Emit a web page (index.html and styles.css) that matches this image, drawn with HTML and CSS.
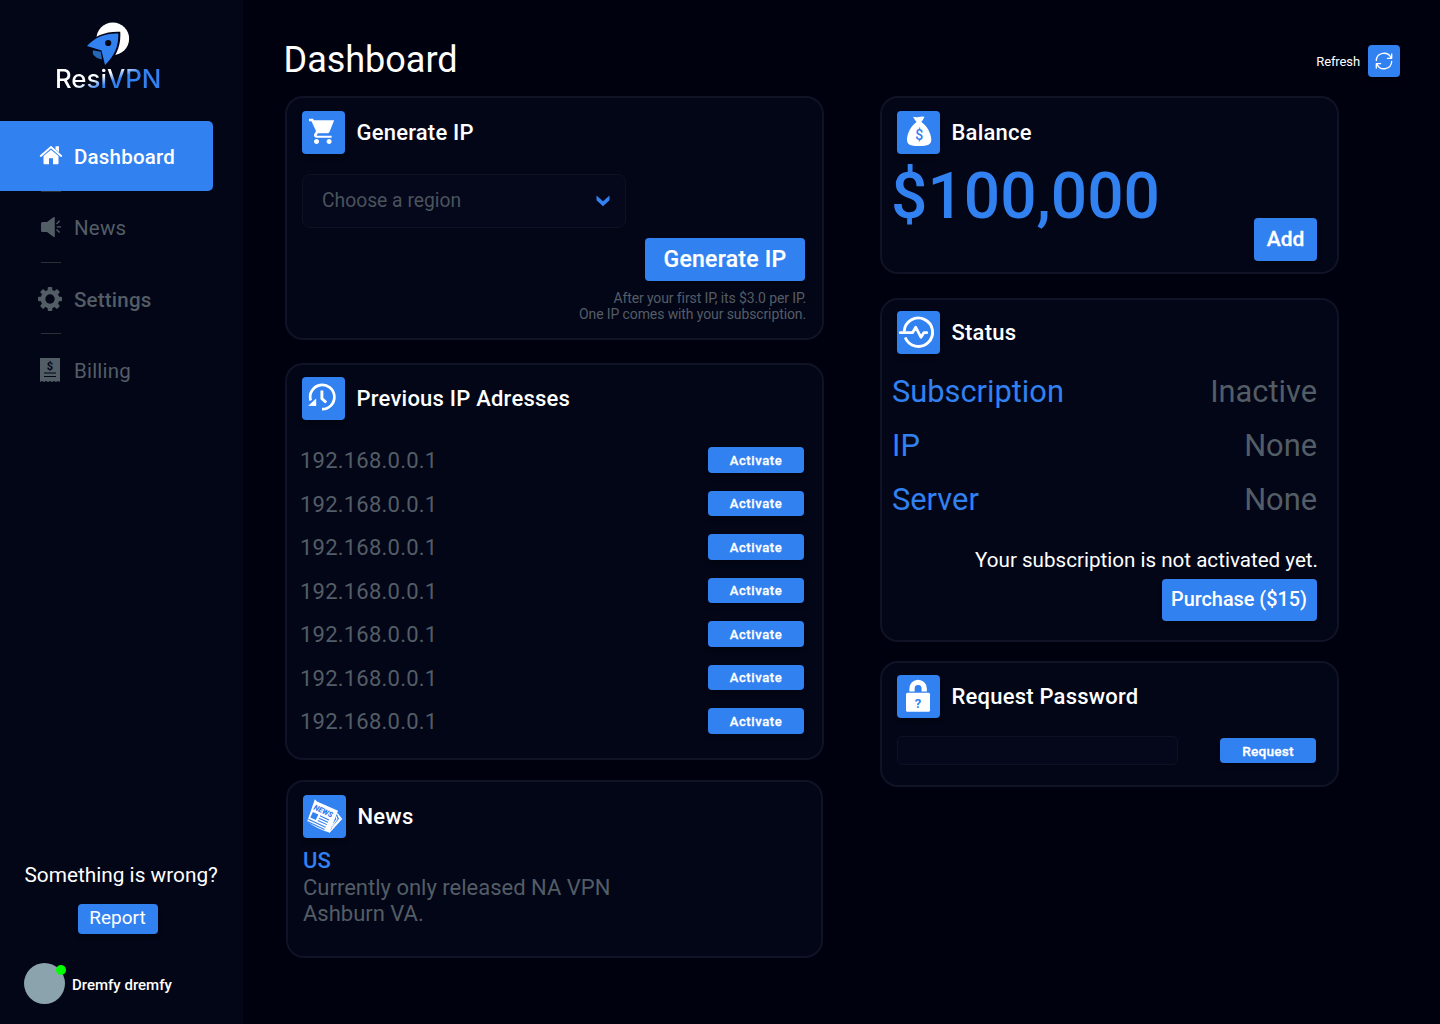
FILE: index.html
```html
<!DOCTYPE html>
<html lang="en">
<head>
<meta charset="utf-8">
<title>ResiVPN Dashboard</title>
<link rel="stylesheet" href="styles.css">
</head>
<body>
<div class="app">
  <aside class="sidebar">
    <div class="logo">
      <svg class="logo-mark" width="46" height="46" viewBox="0 0 46 46">
        <circle cx="27.8" cy="17.8" r="16.3" fill="#fff"/>
        <path d="M2 25 Q14 11.5 34 12 Q35 31 20 45 L16.5 29.5 Z" fill="#3281f1" stroke="#030617" stroke-width="2.6"/>
        <path d="M2 25 Q14 12 33.3 12.6 Q34 31 20 44 L16.5 29.5 Z" fill="#3281f1"/>
        <circle cx="23.2" cy="22" r="3.1" fill="#030617"/>
        <path d="M7.8 29.3 L15.8 30.8 L17 38.5 Q11 37.5 7.8 33 Z" fill="#2568b8"/>
      </svg>
      <span class="logo-text">ResiVPN</span>
    </div>
    <nav class="nav">
      <a class="nav-item active">
        <svg class="nav-icon" width="26" height="20" viewBox="-3 .7 26 20"><path d="M.8 10.6 11 1.8l10.2 8.8" fill="none" stroke="#fff" stroke-width="2" stroke-linecap="round"/><path d="M15.500 1H19v6l-3.500-3zM3.500 10.800 11 4.500l7.500 6.300V18q0 1-1 1H13v-6H9v6H4.500q-1 0-1-1z" fill="#fff"/></svg>
        <span>Dashboard</span>
      </a>
      <i class="rule"></i>
      <a class="nav-item">
        <svg class="nav-icon" width="26" height="20" viewBox="-4 0 26 20"><path d="M1.500 5H6l6-4.500Q12.600 0 13.800 0v20q-1.200 0-1.800-.5L6 15H1.500Q0 15 0 13.500v-7Q0 5 1.500 5z" fill="#535d66"/><path d="M15.500 7 18.600 3.800M15.800 9.900H20M15.500 12.500l3.100 3" stroke="#535d66" stroke-width="1.300"/></svg>
        <span>News</span>
      </a>
      <i class="rule"></i>
      <a class="nav-item medium lower">
        <svg class="nav-icon" width="26" height="24" viewBox="-13 -12 26 24"><g fill="#535d66"><rect x="-2.300" y="-12" width="4.600" height="24" rx="1"/><rect x="-2.300" y="-12" width="4.600" height="24" rx="1" transform="rotate(45)"/><rect x="-2.300" y="-12" width="4.600" height="24" rx="1" transform="rotate(90)"/><rect x="-2.300" y="-12" width="4.600" height="24" rx="1" transform="rotate(135)"/><circle r="9.300"/></g><circle r="4.700" fill="#030617"/></svg>
        <span>Settings</span>
      </a>
      <i class="rule"></i>
      <a class="nav-item lower">
        <svg class="nav-icon" width="26" height="24" viewBox="-3 0 26 24"><path d="M0 0h20v24l-2-1-2 1-2-1-2 1-2-1-2 1-2-1-2 1-2-1-2 1z" fill="#535d66"/><text x="10" y="11.500" text-anchor="middle" class="receipt-sign">$</text><path d="M4 15h12M4 18.500h12" stroke="#030617" stroke-width="1"/></svg>
        <span>Billing</span>
      </a>
    </nav>
    <div class="help">
      <p class="help-text">Something is wrong?</p>
      <button class="btn report">Report</button>
    </div>
    <div class="user">
      <div class="avatar"><i class="online"></i></div>
      <span class="user-name">Dremfy dremfy</span>
    </div>
  </aside>

  <main class="main">
    <header class="top">
      <h1>Dashboard</h1>
      <div class="refresh">
        <span>Refresh</span>
        <button class="btn refresh-btn"><svg width="20" height="20" viewBox="-10 -10 20 20" fill="none" stroke="#fff" stroke-width="1.300" stroke-linecap="round" stroke-linejoin="round"><path d="M-7.700-.5A7.700 7.700 0 0 1 7-3.200M7.700.5A7.700 7.700 0 0 1-7 3.200M7.700-7v4.300H3.400M-7.700 7V2.700h4.300"/></svg></button>
      </div>
    </header>

    <div class="columns">
      <div class="col left">
        <section class="card generate">
          <div class="card-head">
            <svg class="tile" viewBox="0 0 42.500 42.500"><g transform="translate(5.700 5.300) scale(1.260)" fill="#fff"><path d="M7 18c-1.100 0-1.990.9-1.990 2S5.900 22 7 22s2-.9 2-2-.9-2-2-2zM1 2v2h2l3.600 7.590-1.350 2.450c-.16.28-.25.61-.25.96 0 1.100.9 2 2 2h12v-1.500H7.420c-.14 0-.25-.11-.25-.25l.03-.12.9-1.630h7.450c.75 0 1.410-.41 1.750-1.030L21 3.200H4.800L4.270 2H1zM17 18c-1.100 0-1.990.9-1.990 2s.89 2 1.990 2 2-.9 2-2-.9-2-2-2z"/></g></svg>
            <h2>Generate IP</h2>
          </div>
          <div class="select"><span>Choose a region</span><svg width="14" height="12" viewBox="0 0 14 12"><path d="M.5.5 7 6.300 13.500.5v4.700L7 11.300.5 5.200z" fill="#3281f1"/></svg></div>
          <button class="btn gen-btn">Generate IP</button>
          <p class="note">After your first IP, its $3.0 per IP.<br>One IP comes with your subscription.</p>
        </section>

        <section class="card previous">
          <div class="card-head">
            <svg class="tile" viewBox="0 0 42.500 42.500" fill="none" stroke="#fff"><path d="M20 32.100A12.100 12.100 0 1 0 8.700 23.500" stroke-width="2.700"/><path d="M6.200 28.700 14.200 29V21.500z" fill="#fff" stroke="none"/><path d="M19.900 13.500v8l4.300 4" stroke-width="2.900"/></svg>
            <h2>Previous IP Adresses</h2>
          </div>
          <ul class="ips">
            <li><span>192.168.0.0.1</span><button class="btn small">Activate</button></li>
            <li><span>192.168.0.0.1</span><button class="btn small">Activate</button></li>
            <li><span>192.168.0.0.1</span><button class="btn small">Activate</button></li>
            <li><span>192.168.0.0.1</span><button class="btn small">Activate</button></li>
            <li><span>192.168.0.0.1</span><button class="btn small">Activate</button></li>
            <li><span>192.168.0.0.1</span><button class="btn small">Activate</button></li>
            <li><span>192.168.0.0.1</span><button class="btn small">Activate</button></li>
          </ul>
        </section>

        <section class="card news">
          <div class="card-head">
            <svg class="tile" viewBox="0 0 42.500 42.500"><path d="M34 18.500l4.500 5.500L26 37.500M35 20.500l1.700 3.300-8 9.700M33 21.500l1 2.500-5 7" fill="none" stroke="#fff" stroke-width="1.200"/><path d="M11.800 4.200 14 6.500l21 9.300-8.500 21.700Q14 34 4.200 26.500z" fill="#fff"/><g transform="translate(13 8) rotate(25)"><text x="0" y="6.800" class="paper-title">NEWS</text><path d="M1 9.500h6v6H1z" fill="#3281f1"/><path d="M9 10h10M9 12.500h10M9 15h10M0 18h19M0 20.500h19M-.5 23h18" stroke="#3281f1" stroke-width="1.100"/></g></svg>
            <h2>News</h2>
          </div>
          <h3>US</h3>
          <p class="news-text">Currently only released NA VPN<br>Ashburn VA.</p>
        </section>
      </div>

      <div class="col right">
        <section class="card balance">
          <div class="card-head">
            <svg class="tile" viewBox="0 0 42.500 42.500"><path d="M16 5.700q3 .8 6 .2 3-.8 5.500-.2-1.200 3-3.500 5.600h-4.200Q17.500 8.500 16 5.700zM19.500 11h5C30 15 34 22 34.300 28.500 34.300 33.500 31 35 22 35S10 33.500 10 28.500C10.300 22 14 15 19.500 11z" fill="#fff"/><text x="22.300" y="28.800" text-anchor="middle" class="bag-sign">$</text></svg>
            <h2>Balance</h2>
          </div>
          <div class="amount">$100,000</div>
          <button class="btn add">Add</button>
        </section>

        <section class="card status">
          <div class="card-head">
            <svg class="tile" viewBox="0 0 42.500 42.500" fill="none" stroke="#fff"><path d="M7.200 20.500A14.200 14.200 0 1 1 8.200 26.500" stroke-width="2.900"/><path d="M3.200 21.700H15.500L18.700 16.200 24 26.300 26.800 21.700H29.800" stroke-width="2.700" stroke-linecap="round" stroke-linejoin="round"/></svg>
            <h2>Status</h2>
          </div>
          <dl>
            <div><dt>Subscription</dt><dd>Inactive</dd></div>
            <div><dt>IP</dt><dd>None</dd></div>
            <div><dt>Server</dt><dd>None</dd></div>
          </dl>
          <p class="sub-note">Your subscription is not activated yet.</p>
          <button class="btn purchase">Purchase ($15)</button>
        </section>

        <section class="card password">
          <div class="card-head">
            <svg class="tile" viewBox="0 0 42.500 42.500"><path d="M15 16.500v-3a6.100 6.100 0 0 1 12.200 0v3" fill="none" stroke="#fff" stroke-width="5.300"/><rect x="9" y="17.700" width="24" height="19" rx="1.500" fill="#fff"/><text x="21" y="32.500" text-anchor="middle" class="lock-sign">?</text></svg>
            <h2>Request Password</h2>
          </div>
          <div class="request-row">
            <div class="field"></div>
            <button class="btn small request">Request</button>
          </div>
        </section>
      </div>
    </div>
  </main>
</div>
</body>
</html>
```
FILE: styles.css
```css
* { box-sizing: border-box; }
body {
  margin: 0;
  background: #00010f;
  color: #fff;
  font-family: Roboto, "Liberation Sans", sans-serif;
}
h1, h2, h3, p, ul, dl, dd { margin: 0; padding: 0; }
.app { display: flex; width: 1440px; height: 1024px; overflow: hidden; }

/* Sidebar */
.sidebar {
  width: 243px;
  height: 1024px;
  background: #030617;
  display: flex;
  flex-direction: column;
}
.logo { height: 121px; padding: 21px 0 0 55px; display: flex; flex-direction: column; align-items: flex-start; }
.logo-mark { margin-left: 30px; display: block; }
.logo-text {
  margin-top: -4px;
  font: 500 25.800px/32px Inter, sans-serif;
  background: linear-gradient(158deg, #fff 43%, #3281f1 56%);
  -webkit-background-clip: text;
  background-clip: text;
  color: transparent;
}
.nav { display: flex; flex-direction: column; }
.nav-item {
  width: 213px;
  height: 70px;
  padding-left: 37px;
  display: flex;
  align-items: center;
  gap: 11px;
  font-size: 20.500px;
  line-height: 24px;
  letter-spacing: .2px;
  color: #535d66;
}
.nav-item span { padding-top: 2px; }
.nav-item.active { background: #3281f1; border-radius: 0 5px 5px 0; color: #fff; font-weight: 500; }
.nav-item.medium { font-weight: 500; }
.nav-item.lower { padding-top: 2px; }
.nav-icon { display: block; }
.rule { width: 20px; height: 1px; margin-left: 41px; background: #2b3037; }
.receipt-sign { font: 700 11px Roboto, sans-serif; fill: #030617; }
.help { margin-top: auto; display: flex; flex-direction: column; align-items: flex-start; }
.help-text { font-size: 20.800px; line-height: 24px; margin-left: 24.500px; }
.btn {
  border: 0;
  padding: 0;
  border-radius: 4px;
  background: #3281f1;
  color: #fff;
  font-family: inherit;
  display: flex;
  align-items: center;
  justify-content: center;
  box-shadow: 0 4px 4px rgba(0, 0, 0, .25);
}
.report { width: 80px; height: 30px; margin: 17px 0 0 77.500px; font-size: 19px; padding-bottom: 3px; }
.user { height: 90px; padding: 29px 0 0 24px; display: flex; align-items: flex-start; gap: 7px; }
.avatar { position: relative; width: 41px; height: 41px; border-radius: 50%; background: #8ba3ad; }
.online { position: absolute; left: 32px; top: 2px; width: 10px; height: 10px; border-radius: 50%; background: #0f0; }
.user-name { font-size: 15px; font-weight: 500; line-height: 18px; margin-top: 13px; }

/* Main */
.main { flex: 1; padding-left: 42px; }
.top { height: 96px; display: flex; justify-content: space-between; align-items: flex-start; padding: 38px 40px 0 0; }
h1 { font-size: 36px; line-height: 43px; font-weight: 400; margin-left: -1.500px; padding-top: 1px; }
.refresh { display: flex; align-items: center; gap: 8px; padding-top: 7px; font-size: 13px; letter-spacing: -.1px; }
.refresh span { padding-top: 1px; }
.refresh-btn { width: 32px; height: 32px; }
.columns { display: flex; gap: 56px; align-items: flex-start; }
.col { display: flex; flex-direction: column; }
.left { width: 539px; }
.right { width: 459px; }
.card { background: #030617; border: 2px solid #101226; border-radius: 18px; padding: 13px 15px 0; }
.card-head { display: flex; align-items: center; gap: 12px; height: 42.500px; }
.tile { width: 42.500px; height: 42.500px; background: #3281f1; border-radius: 4px; display: block; box-shadow: 0 4px 4px rgba(0, 0, 0, .25); }
h2 { font-size: 22px; line-height: 26px; font-weight: 500; letter-spacing: .22px; padding-top: 2px; }

.generate { height: 244px; margin-bottom: 23px; display: flex; flex-direction: column; }
.select {
  width: 324px; height: 54px; margin-top: 20px; padding: 0 15px 0 19px;
  border: 1px solid #0f1123; border-radius: 8px; background: #05071b;
  display: flex; align-items: center; justify-content: space-between;
  font-size: 19.300px; color: #4a535b;
}
.gen-btn { width: 160px; height: 43px; margin: 10px 2px 0 0; padding-top: 1px; align-self: flex-end; font-size: 23px; font-weight: 500; letter-spacing: .25px; -webkit-text-stroke: .2px #fff; }
.note { margin: 9px 1px 0 0; text-align: right; font-size: 14px; line-height: 16px; letter-spacing: -.11px; color: #535d66; }

.previous { height: 397px; margin-bottom: 20px; padding-top: 12px; }
.ips { list-style: none; margin: 18.500px 0 0 -2px; }
.ips li { height: 43.500px; display: flex; align-items: center; justify-content: space-between; padding: 0 3px 0 0; font-size: 22px; color: #535d66; }
.ips li span { padding-top: 2px; letter-spacing: .22px; }
.small { width: 96px; height: 25.500px; padding-top: 1px; font-size: 13px; font-weight: 500; letter-spacing: .6px; -webkit-text-stroke: .3px #fff; }
.small.request { padding-top: 0; font-size: 13.700px; letter-spacing: .15px; }

.news { height: 178px; width: 537px; margin-left: 1px; }
h3 { font-size: 22px; line-height: 26px; font-weight: 500; color: #3281f1; margin-top: 10px; }
.news-text { font-size: 22px; line-height: 26px; margin-top: 1px; color: #535d66; }

.balance { height: 178px; margin-bottom: 24px; display: flex; flex-direction: column; }
.amount { font-size: 64px; line-height: 76px; font-weight: 500; color: #3281f1; margin-left: -6px; padding-top: 5.500px; height: 64px; }
.add { align-self: flex-end; width: 63px; height: 43px; font-size: 21px; font-weight: 500; margin-right: 5px; -webkit-text-stroke: .3px #fff; }

.status { height: 344px; margin-bottom: 19px; padding-top: 11px; display: flex; flex-direction: column; }
dl { margin: 11px 5px 0 -5px; }
dl div { height: 54px; display: flex; justify-content: space-between; align-items: center; font-size: 30.800px; }
dt { color: #3281f1; }
dd { color: #535d66; }
.sub-note { text-align: right; font-size: 20.600px; line-height: 24px; margin: 21px 4px 0 0; }
.purchase { align-self: flex-end; width: 155px; height: 42px; margin: 7px 5px 0 0; padding-right: 1px; font-size: 19.850px; font-weight: 500; }

.password { height: 126px; padding-top: 12px; }
.request-row { margin-top: 18.500px; display: flex; align-items: center; justify-content: space-between; padding-right: 6px; }
.field { width: 281px; height: 29px; border: 1px solid #0f1123; border-radius: 5px; background: #05071b; }
.paper-title { font: italic 900 7.500px Roboto, sans-serif; fill: #3281f1; }
.bag-sign { font: 500 14px Roboto, sans-serif; fill: #3281f1; }
.lock-sign { font: 700 13px Roboto, sans-serif; fill: #3281f1; }
```
